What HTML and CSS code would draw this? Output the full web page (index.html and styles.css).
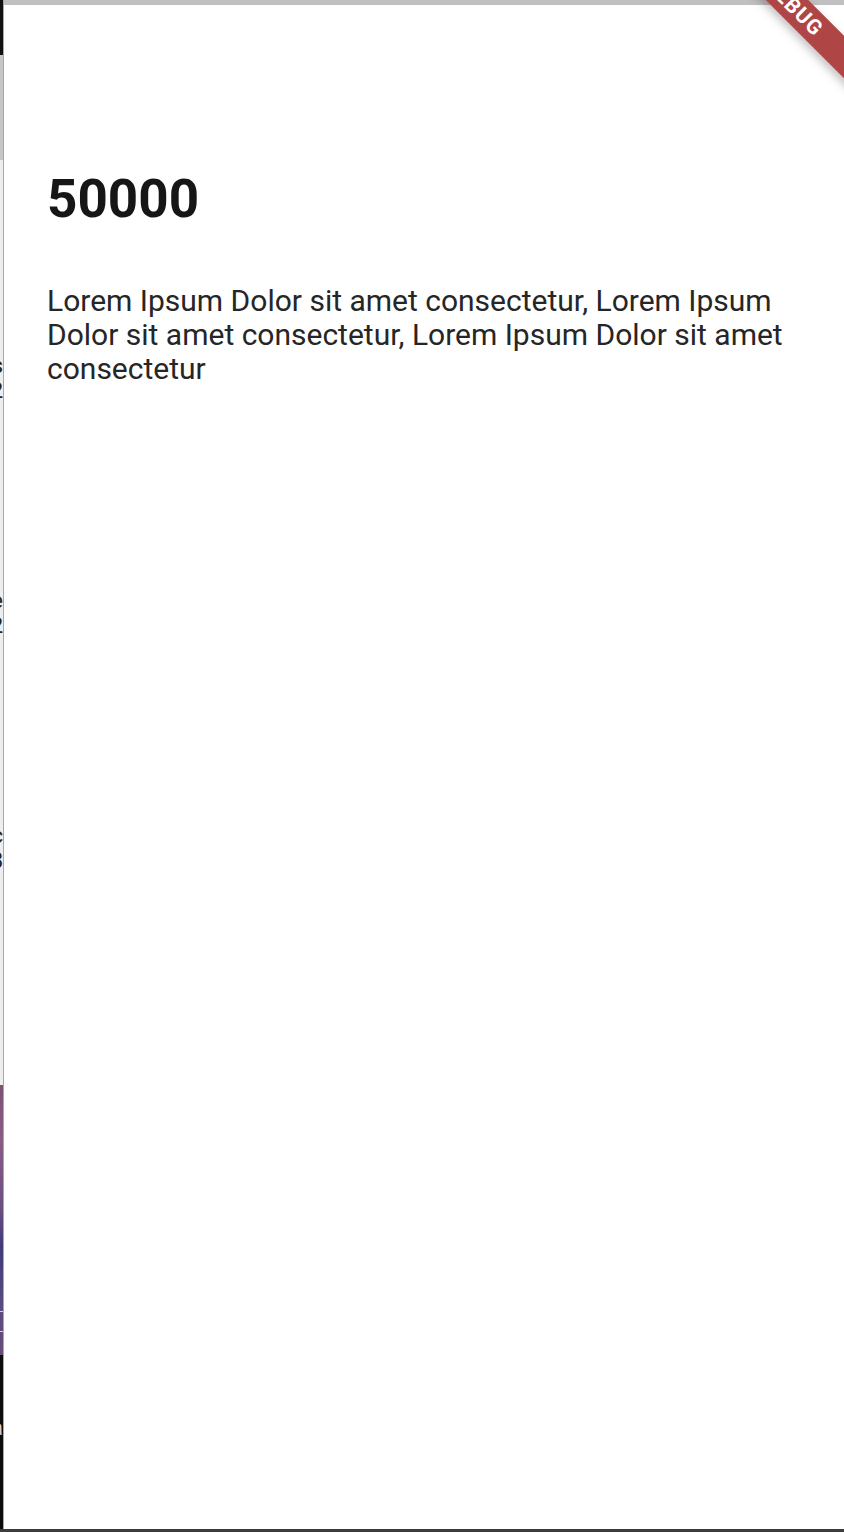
FILE: index.html
```html
<!DOCTYPE html>
<html>
<head>
<meta charset="utf-8">
<link rel="stylesheet" href="styles.css">
</head>
<body>
<div class="screen">
  <div class="behind">
    <div class="seg seg-black"></div>
    <div class="seg seg-bar"></div>
    <div class="seg seg-list">
      <div class="peek peek-1"><span>Items</span><span>12</span></div>
      <div class="peek peek-2"><span>Price</span><span>42</span></div>
      <div class="peek peek-3"><span>Stoc</span><span>38</span></div>
    </div>
    <div class="seg seg-image"><span class="streak s1"></span><span class="streak s2"></span></div>
    <div class="seg seg-dark"><span class="peek-a">a</span></div>
  </div>
  <div class="page">
    <div class="topbar"></div>
    <main class="content">
      <h1 class="amount">50000</h1>
      <p class="desc">Lorem Ipsum Dolor sit amet consectetur, Lorem Ipsum Dolor sit amet consectetur, Lorem Ipsum Dolor sit amet consectetur</p>
    </main>
    <div class="banner-wrap"><div class="banner">DEBUG</div></div>
  </div>
</div>
<div class="bottomline"></div>
</body>
</html>
```

FILE: styles.css
```css
html, body {
  margin: 0;
  padding: 0;
}
body {
  width: 844px;
  height: 1532px;
  overflow: hidden;
  background: #ffffff;
  font-family: Roboto, "Noto Sans", sans-serif;
  display: flex;
  flex-direction: column;
}
.screen {
  flex: 1;
  display: flex;
  min-height: 0;
}
.behind {
  width: 3px;
  display: flex;
  flex-direction: column;
  overflow: hidden;
  border-right: 1px solid #a8a8a8;
}
.seg {
  overflow: hidden;
}
.seg-black {
  height: 55px;
  background: #111111;
}
.seg-bar {
  height: 105px;
  background: #c6c6c6;
}
.seg-list {
  height: 925px;
  background: #eeeeee;
  display: flex;
  flex-direction: column;
}
.peek {
  height: 50px;
  display: flex;
  flex-direction: column;
  align-items: flex-end;
  font-size: 22px;
  line-height: 25px;
  color: #222;
  white-space: nowrap;
}
.peek-1 { margin-top: 193px; }
.peek-2 { margin-top: 185px; }
.peek-3 { margin-top: 185px; }
.seg-image {
  height: 270px;
  background: linear-gradient(180deg, #7a5272 0%, #8a5c86 20%, #6c4f80 45%, #3f3c78 60%, #574a80 80%, #6a4d78 100%);
  position: relative;
}
.streak {
  position: absolute;
  left: 0;
  width: 4px;
  height: 1px;
  background: #d8c8e0;
}
.s1 { top: 226px; }
.s2 { top: 246px; }
.seg-dark {
  flex: 1;
  background: #0c0c0c;
  display: flex;
  justify-content: flex-end;
}
.peek-a {
  margin-top: 60px;
  font-size: 22px;
  line-height: 26px;
  height: 26px;
  color: #cfcfcf;
}
.page {
  flex: 1;
  position: relative;
  overflow: hidden;
  background: #ffffff;
  display: flex;
  flex-direction: column;
}
.topbar {
  height: 5px;
  background: #c0c0c0;
}
.content {
  padding: 0 36px 0 43px;
}
.amount {
  margin: 159px 0 0;
  font-size: 53px;
  line-height: 70px;
  font-weight: 700;
  color: #161616;
}
.desc {
  margin: 50px 0 0;
  font-size: 30px;
  line-height: 34px;
  font-weight: 400;
  color: #262626;
}
.banner-wrap {
  position: absolute;
  top: 0;
  right: 0;
  width: 120px;
  height: 120px;
  overflow: hidden;
}
.banner {
  position: absolute;
  top: -8px;
  right: -50px;
  width: 200px;
  height: 30px;
  transform: rotate(45deg);
  background: #b04545;
  color: #ffffff;
  font-weight: 700;
  font-size: 21px;
  line-height: 30px;
  text-align: center;
  letter-spacing: 1px;
  box-shadow: 0 4px 10px rgba(0, 0, 0, 0.25);
}
.bottomline {
  height: 3px;
  background: #3c3c3c;
}
```
